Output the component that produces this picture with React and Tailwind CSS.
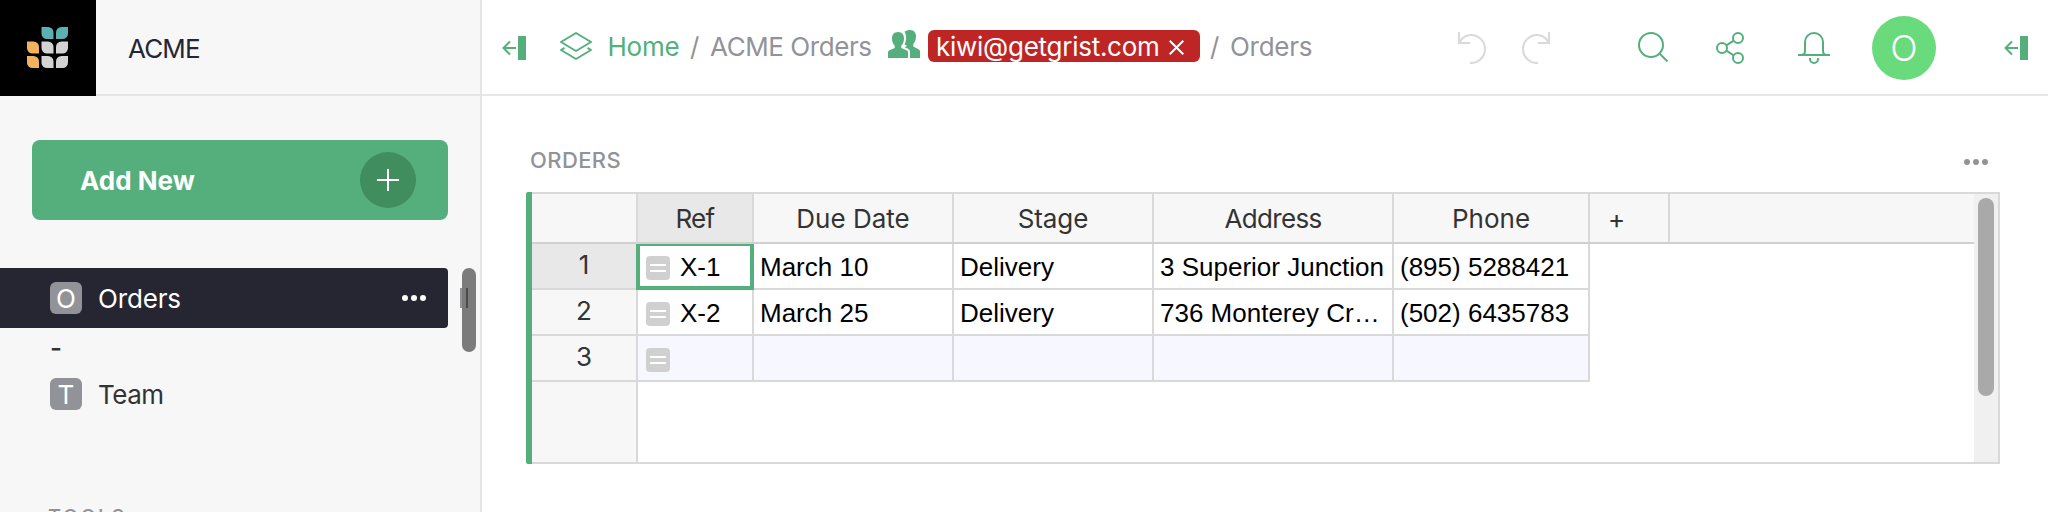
const LEAVES = [
  [14.5, 0, "r", "#5bb0b3"],
  [29, 0, "l", "#5bb0b3"],
  [0, 14.5, "r", "#f2b25e"],
  [14.5, 14.5, "r", "#d3d3d3"],
  [29, 14.5, "l", "#d3d3d3"],
  [0, 29, "r", "#f2b25e"],
  [14.5, 29, "r", "#d3d3d3"],
  [29, 29, "l", "#d3d3d3"],
];

function Logo() {
  return (
    <svg width="41" height="41" viewBox="0 0 41 41">
      {LEAVES.map(([x, y, side, fill]) => (
        <path
          key={`${x}-${y}`}
          transform={`translate(${x} ${y})`}
          fill={fill}
          d={
            side === "r"
              ? "M0 0H6.5A5.5 5.5 0 0 1 12 5.500V12H5.500A5.500 5.500 0 0 1 0 6.500Z"
              : "M12 0H5.500A5.500 5.500 0 0 0 0 5.500V12H6.500A5.500 5.500 0 0 0 12 6.500Z"
          }
        />
      ))}
    </svg>
  );
}

function Dots({ className }) {
  return (
    <svg width="24" height="6" viewBox="0 0 24 6" className={className} fill="currentColor">
      <circle cx="3" cy="3" r="3" />
      <circle cx="12" cy="3" r="3" />
      <circle cx="21" cy="3" r="3" />
    </svg>
  );
}

function PanelIcon({ className }) {
  return (
    <svg width="24" height="24" viewBox="0 0 24 24" className={className}>
      <path d="M14 12H1.500M8 5.500L1.500 12L8 18.500" fill="none" stroke="currentColor" strokeWidth="2" />
      <rect x="16" width="8" height="24" rx="0.500" fill="currentColor" />
    </svg>
  );
}

function LayersIcon({ className }) {
  return (
    <svg width="32" height="28" viewBox="0 0 32 28" className={className} fill="none" stroke="currentColor" strokeWidth="2" strokeLinejoin="round">
      <path d="M16 1L31 10L16 19L1 10Z" />
      <path d="M4.500 15.800L1 18L16 27L31 18L27.500 15.800" />
    </svg>
  );
}

function UsersIcon({ className }) {
  return (
    <svg width="32" height="28" viewBox="0 0 32 28" className={className} fill="currentColor">
      <path d="M10 2C14 2 16.300 4.800 16 9C15.800 12 15 14 13.300 15.500V18L18.500 20.200C19.600 20.700 20 21.300 20 22.500V28H0V22.500C0 21.300 .4 20.700 1.500 20.200L6.700 18V15.500C5 14 4.200 12 4 9C3.700 4.800 6 2 10 2Z" />
      <path d="M16.500 1.800C18 .5 20 0 22 0C26 0 28.300 2.800 28 7C27.800 10 27 12.300 25.300 13.800V16.500L30.500 19.200C31.600 19.800 32 20.400 32 21.500V28H22V22C22 20 21 19 19.500 18.400L16.800 17.200L19 15.800C17.800 15.200 17 14.600 16.600 14.200C18 11.500 18.400 9 18 6.500C17.800 4.500 17.400 3 16.500 1.800Z" />
    </svg>
  );
}

function UndoIcon({ className }) {
  return (
    <svg width="28" height="32" viewBox="0 0 28 32" className={className} fill="none" stroke="currentColor" strokeWidth="2">
      <path d="M1 0V11H12" />
      <path d="M1.500 10.500C3.800 6 8 3 13 3A14 14 0 0 1 27 17A14 14 0 0 1 12 31" />
    </svg>
  );
}

function SearchIcon({ className }) {
  return (
    <svg width="32" height="32" viewBox="0 0 32 32" className={className} fill="none" stroke="currentColor" strokeWidth="2">
      <circle cx="13" cy="13" r="12" />
      <path d="M21.500 21.500L29.500 29.500" />
    </svg>
  );
}

function ShareIcon({ className }) {
  return (
    <svg width="28" height="32" viewBox="0 0 28 32" className={className} fill="none" stroke="currentColor" strokeWidth="2">
      <circle cx="6" cy="16" r="5" />
      <circle cx="22" cy="6" r="5" />
      <circle cx="22" cy="26" r="5" />
      <path d="M10.300 13.300L17.700 8.700M10.300 18.700L17.700 23.300" />
    </svg>
  );
}

function BellIcon({ className }) {
  return (
    <svg width="32" height="32" viewBox="0 0 32 32" className={className} fill="none" stroke="currentColor" strokeWidth="2">
      <path d="M0 23H32" />
      <path d="M3 23C5.500 23 7 21.500 7 19V10A9 9 0 0 1 25 10V19C25 21.500 26.500 23 29 23" />
      <path d="M12 26V27A4 4 0 0 0 20 27V26" />
    </svg>
  );
}

function RecordIcon() {
  return (
    <svg width="24" height="24" viewBox="0 0 24 24" className="mt-0.5">
      <rect width="24" height="24" rx="4" fill="#d0d0d0" />
      <path d="M4 9H20M4 15H20" stroke="white" strokeWidth="2" />
    </svg>
  );
}

function PageBadge({ children }) {
  return (
    <span className="flex h-8 w-8 items-center justify-center rounded-[6px] bg-[#929299] pt-0.5 text-white">
      {children}
    </span>
  );
}

function Sidebar() {
  return (
    <aside className="flex h-full w-[482px] shrink-0 flex-col border-r-2 border-[#e5e5e5] bg-[#f7f7f7]">
      <div className="flex h-24 shrink-0">
        <div className="flex h-24 w-24 items-center justify-center bg-black pr-px pb-px">
          <Logo />
        </div>
        <div className="flex flex-1 items-center border-b-2 border-[#e5e5e5] pt-1 pl-8 tracking-[-0.85px] text-[#262633]">
          ACME
        </div>
      </div>

      <div className="mt-11 ml-8 flex h-20 w-[416px] shrink-0 items-center justify-between rounded-lg bg-[#54af7d] pr-8 pl-12">
        <span className="pt-0.5 font-bold text-white">Add New</span>
        <span className="flex h-14 w-14 items-center justify-center rounded-full bg-[#408d5e]">
          <svg width="22" height="22" viewBox="0 0 22 22">
            <path d="M11 0V22M0 11H22" stroke="white" strokeWidth="2" />
          </svg>
        </span>
      </div>

      <div className="mt-12 flex flex-1 justify-between overflow-hidden pr-1">
        <div className="w-[448px]">
          <div className="flex h-[60px] items-center rounded-r bg-[#262633] pl-[50px] text-white">
            <PageBadge>O</PageBadge>
            <span className="ml-4 flex-1 pt-0.5 tracking-[-0.15px]">Orders</span>
            <Dots className="mr-[22px]" />
          </div>
          <div className="flex h-9 items-center pt-1 pl-[50px] font-medium text-[#333333]">-</div>
          <div className="flex h-[60px] items-center pl-[50px] text-[#333333]">
            <PageBadge>T</PageBadge>
            <span className="ml-4 pt-0.5 tracking-[-0.5px]">Team</span>
          </div>
          <div className="mt-[81px] pl-12 text-[20px] leading-6 font-medium tracking-[2.3px] text-[#929299]">TOOLS</div>
        </div>
        <div className="relative h-[84px] w-[14px] rounded-full bg-[#7b7b7b]">
          <span className="absolute top-5 -left-0.5 h-5 w-0.5 bg-[#929299]" />
          <span className="absolute top-5 left-1 h-5 w-0.5 bg-[#4a4a4a]" />
        </div>
      </div>
    </aside>
  );
}

function TopBar() {
  return (
    <header className="flex h-24 shrink-0 items-center border-b-2 border-[#e8e8e8] pt-0.5 pl-5 text-[#929299]">
      <PanelIcon className="text-[#54af7d]" />
      <LayersIcon className="mb-1 ml-[34px] text-[#54af7d]" />
      <span className="ml-[15.500px] w-[82.500px] pb-0.5 tracking-[-0.2px] text-[#54af7d]">Home</span>
      <span className="w-5 pb-0.5">/</span>
      <span className="w-[178px] pb-0.5 tracking-[-0.42px] whitespace-nowrap">ACME Orders</span>
      <UsersIcon className="mb-2 text-[#54af7d]" />
      <span className="mb-1 ml-2 flex h-8 w-[272px] items-center rounded-[6px] bg-[#be2626] pl-2 text-white">
        <span className="w-[233px] pt-0.5 tracking-[-0.26px]">kiwi@getgrist.com</span>
        <svg width="15" height="15" viewBox="0 0 15 15" className="mt-[3px]">
          <path d="M.7 .7L14.300 14.300M14.300 .7L.7 14.300" stroke="white" strokeWidth="2" />
        </svg>
      </span>
      <span className="ml-[10px] w-5 pb-0.5">/</span>
      <span className="pb-0.5 tracking-[-0.28px]">Orders</span>

      <div className="ml-auto flex items-center">
        <UndoIcon className="text-[#d9d9d9]" />
        <UndoIcon className="ml-9 -scale-x-100 text-[#d9d9d9]" />
        <SearchIcon className="ml-[88px] text-[#54af7d]" />
        <ShareIcon className="ml-[46px] text-[#54af7d]" />
        <BellIcon className="ml-[54px] text-[#54af7d]" />
        <span className="ml-[42px] flex h-16 w-16 items-center justify-center rounded-full bg-[#69db7c] text-[36px] font-light text-white">
          O
        </span>
        <PanelIcon className="mr-5 ml-[68px] text-[#54af7d]" />
      </div>
    </header>
  );
}

const ROWS = [
  ["X-1", "March 10", "Delivery", "3 Superior Junction", "(895) 5288421"],
  ["X-2", "March 25", "Delivery", "736 Monterey Cr…", "(502) 6435783"],
  ["", "", "", "", ""],
];
const WIDTHS = ["w-[116px]", "w-[200px]", "w-[200px]", "w-[240px]", "w-[196px]"];
const HEADERS = [
  ["Ref", "tracking-[-0.7px] bg-[#e8e8e8]"],
  ["Due Date", "tracking-normal"],
  ["Stage", "tracking-[-0.1px]"],
  ["Address", "tracking-[-0.65px]"],
  ["Phone", "tracking-normal"],
];

function Grid() {
  return (
    <div className="flex h-[272px] w-[1474px]">
      <div className="w-1.5 rounded-l-xs bg-[#54af7d]" />
      <div className="flex flex-1 border-y-2 border-r-2 border-[#d9d9d9]">
        <div className="flex w-[106px] flex-col border-r-2 border-[#d9d9d9] bg-[#f7f7f7] text-[#333333]">
          <div className="h-[50px] border-b-2 border-[#d0d0d0]" />
          {ROWS.map((_, i) => (
            <div
              key={i}
              className={`flex h-[46px] items-center justify-center border-b-2 border-[#d9d9d9] pb-0.5 ${i === 0 ? "bg-[#e8e8e8]" : ""}`}
            >
              {i + 1}
            </div>
          ))}
        </div>
        <div className="flex flex-1 flex-col">
          <div className="flex h-[50px] border-b-2 border-[#d0d0d0] bg-[#f7f7f7] text-[#333333]">
            {HEADERS.map(([name, style], i) => (
              <div key={name} className={`flex items-center justify-center border-r-2 border-[#d9d9d9] pt-0.5 ${WIDTHS[i]} ${style}`}>
                {name}
              </div>
            ))}
            <div className="flex w-20 items-center border-r-2 border-[#d9d9d9] pt-0.5 pl-[18px]">+</div>
          </div>
          {ROWS.map((row, r) => (
            <div key={r} className={`flex h-[46px] w-[952px] font-['Liberation_Sans',sans-serif] text-black ${r === 2 ? "bg-[#f6f7ff]" : ""}`}>
              {row.map((value, c) => (
                <div
                  key={c}
                  className={`relative flex items-center border-r-2 border-b-2 border-[#d9d9d9] pt-0.5 whitespace-nowrap ${WIDTHS[c]} ${c === 0 ? "gap-2.5 pl-2" : "pl-1.5"}`}
                >
                  {c === 0 && <RecordIcon />}
                  {value}
                  {r === 0 && c === 0 && (
                    <span className="absolute top-0 -right-0.5 -bottom-0.5 -left-0.5 border-4 border-t-2 border-[#54af7d]" />
                  )}
                </div>
              ))}
            </div>
          ))}
        </div>
        <div className="flex w-6 justify-center bg-[#f0f0f0] pt-1">
          <div className="h-[198px] w-4 rounded-full bg-[#a9a9a9]" />
        </div>
      </div>
    </div>
  );
}

export default function App() {
  return (
    <div className="flex h-[512px] w-[2048px] overflow-hidden bg-white font-['Inter',sans-serif] text-[26px] leading-8">
      <Sidebar />
      <main className="flex flex-1 flex-col">
        <TopBar />
        <div className="flex flex-col pl-11">
          <div className="flex h-24 w-[1474px] items-center justify-between pt-9 pr-3 pl-1 text-[#929299]">
            <span className="pb-1 text-[22px] font-medium tracking-[0.4px]">ORDERS</span>
            <Dots />
          </div>
          <Grid />
        </div>
      </main>
    </div>
  );
}
